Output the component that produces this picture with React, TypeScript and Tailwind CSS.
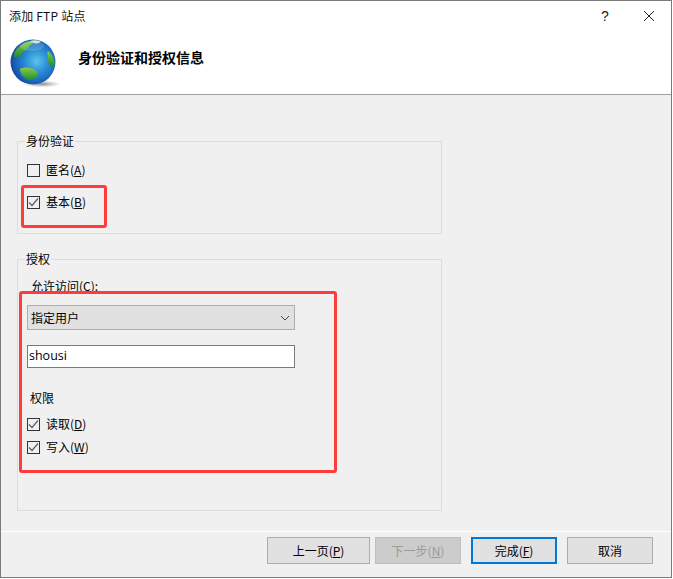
import React from 'react';

const FONT = 'font-["Microsoft_YaHei_UI","Noto_Sans_CJK_SC",sans-serif]';

const Globe = () => (
  <svg width="50" height="52" viewBox="0 0 50 52" className="shrink-0 mt-[8px]">
    <defs>
      <radialGradient id="sea" cx="0.58" cy="0.48" r="0.62">
        <stop offset="0" stopColor="#5fc3ee" />
        <stop offset="0.4" stopColor="#2b8fd6" />
        <stop offset="0.78" stopColor="#1a5fb8" />
        <stop offset="1" stopColor="#113c92" />
      </radialGradient>
      <radialGradient id="shadow" cx="0.5" cy="0.5" r="0.5">
        <stop offset="0" stopColor="#555" stopOpacity="0.7" />
        <stop offset="1" stopColor="#888" stopOpacity="0" />
      </radialGradient>
      <linearGradient id="land" x1="0" y1="0" x2="0" y2="1">
        <stop offset="0" stopColor="#86cc4a" />
        <stop offset="1" stopColor="#1f8c30" />
      </linearGradient>
    </defs>
    <ellipse cx="32" cy="46" rx="19" ry="3.5" fill="url(#shadow)" />
    <circle cx="23" cy="24" r="22.5" fill="url(#sea)" />
    <path d="M5 14C8 8 14 4 21 3C24 4 23 6 20 7C18 9 19 11 16 12C14 14 12 14 11 17C9 19 6 20 4 19C4 17 4 16 5 14Z" fill="url(#land)" />
    <path d="M20 3C24 1.5 28 2 31 4C28 6 23 6 20 3Z" fill="#cfe6c0" />
    <path d="M38 13C41 15 44 20 45 25C44 28 42 30 40 28C38 25 37 21 38 18C37 16 37 15 38 13Z" fill="url(#land)" />
    <path d="M10 31C13 29 19 29 23 31C26 32 29 35 27 38C25 41 22 43 18 42C14 40 10 36 10 31Z" fill="url(#land)" />
    <ellipse cx="22" cy="8" rx="12" ry="5" fill="#fff" opacity="0.15" />
  </svg>
);

const Check = ({ checked, label, mnemonic }: { checked: boolean; label: string; mnemonic: string }) => (
  <div className="flex items-center h-[16px]">
    <span className="w-[13px] h-[13px] border border-[#333333] bg-[#f0f0f0] shrink-0 flex items-center justify-center">
      {checked && (
        <svg width="11" height="11" viewBox="0 0 11 11" fill="none">
          <path d="M1 5.5L4 8.5L10 1.5" stroke="#606060" strokeWidth="1.2" />
        </svg>
      )}
    </span>
    <span className="ml-[6px] text-[12px] leading-[16px] text-black">
      {label}(<u>{mnemonic}</u>)
    </span>
  </div>
);

const Group = ({ title, className, children }: { title: string; className: string; children: React.ReactNode }) => (
  <div className={`w-[425px] border border-[#dcdcdc] ${className}`}>
    <div className="w-fit ml-[7px] -mt-[9px] h-[16px] px-[1px] bg-[#f0f0f0] text-[12px] leading-[16px] text-black">{title}</div>
    {children}
  </div>
);

const WizardButton = ({ children, className }: { children: React.ReactNode; className: string }) => (
  <button className={`h-[27px] border flex items-center justify-center text-[12px] ${className}`}>{children}</button>
);

export default function App() {
  return (
    <div className={`relative w-[673px] h-[579px] bg-white overflow-hidden ${FONT}`}>
      <div className="w-[672px] h-[578px] border border-[#7a7a7a] flex flex-col bg-[#f0f0f0]">
        <div className="h-[93px] bg-white shrink-0">
          <div className="h-[29px] pl-[8px] flex items-center justify-between">
            <span className="text-[12px] text-[#111111] tracking-[0.2px]">添加 FTP 站点</span>
            <div className="flex items-center">
              <span className="w-[12px] text-center text-[14px] leading-none font-['Liberation_Sans',sans-serif] text-[#222222]">?</span>
              <svg width="12" height="12" viewBox="0 0 12 12" className="ml-[32px] mr-[16px]">
                <path d="M1 1L11 11M11 1L1 11" stroke="#222222" strokeWidth="1" fill="none" />
              </svg>
            </div>
          </div>
          <div className="flex items-start pl-[9px] h-[56px]">
            <Globe />
            <h1 className="ml-[18px] mt-[17px] text-[14px] leading-[20px] font-bold text-black">身份验证和授权信息</h1>
          </div>
        </div>
        <div className="h-[1px] bg-[#a0a0a0] shrink-0" />
        <div className="flex-1 flex flex-col pl-[16px] pt-[46px]">
          <Group title="身份验证" className="h-[93px]">
            <div className="flex flex-col gap-[16px] pl-[9px] pt-[13px]">
              <Check checked={false} label="匿名" mnemonic="A" />
              <Check checked label="基本" mnemonic="B" />
            </div>
          </Group>
          <Group title="授权" className="h-[252px] mt-[25px]">
            <div className="pl-[9px]">
              <div className="pl-[4px] pt-[11px] h-[38px] text-[12px] leading-[16px] text-black">允许访问(C):</div>
              <div className="w-[268px] h-[25px] border border-[#adadad] bg-[#e1e1e1] flex items-center justify-between pl-[3px] pr-[4px] text-[12px] text-black">
                <span>指定用户</span>
                <svg width="10" height="6" viewBox="0 0 10 6" fill="none">
                  <path d="M1 1L5 5L9 1" stroke="#444444" strokeWidth="1" />
                </svg>
              </div>
              <div className="mt-[15px] w-[268px] h-[23px] border border-[#7a7a7a] bg-white flex items-center pl-[1px] text-[12.5px] text-black font-['Open_Sans','Noto_Sans',sans-serif]">
                shousi
              </div>
              <div className="mt-[22px] pl-[3px] text-[12px] leading-[16px] text-black">权限</div>
              <div className="mt-[10px] flex flex-col gap-[7px]">
                <Check checked label="读取" mnemonic="D" />
                <Check checked label="写入" mnemonic="W" />
              </div>
            </div>
          </Group>
        </div>
        <div className="h-[1px] bg-white shrink-0" />
        <div className="h-[45px] shrink-0 flex justify-end gap-[10px] pt-[5px] pr-[18px]">
          <div className="flex gap-[5px]">
            <WizardButton className="w-[103px] border-[#adadad] bg-[#e1e1e1] text-black">上一页(<u>P</u>)</WizardButton>
            <WizardButton className="w-[86px] border-[#bfbfbf] bg-[#cccccc] text-[#9a9a9a]">下一步(<u>N</u>)</WizardButton>
          </div>
          <WizardButton className="w-[86px] border-2 border-[#0078d7] bg-[#e1e1e1] text-black">完成(<u>F</u>)</WizardButton>
          <WizardButton className="w-[86px] border-[#adadad] bg-[#e1e1e1] text-black">取消</WizardButton>
        </div>
      </div>
      {/* red annotations drawn over the dialog */}
      <div className="absolute left-[21px] top-[185px] w-[86px] h-[43px] border-[3px] border-[#ff3c3c] rounded-[3px]" />
      <div className="absolute left-[19px] top-[291px] w-[318px] h-[182px] border-[3px] border-[#ff3c3c] rounded-[3px]" />
    </div>
  );
}
